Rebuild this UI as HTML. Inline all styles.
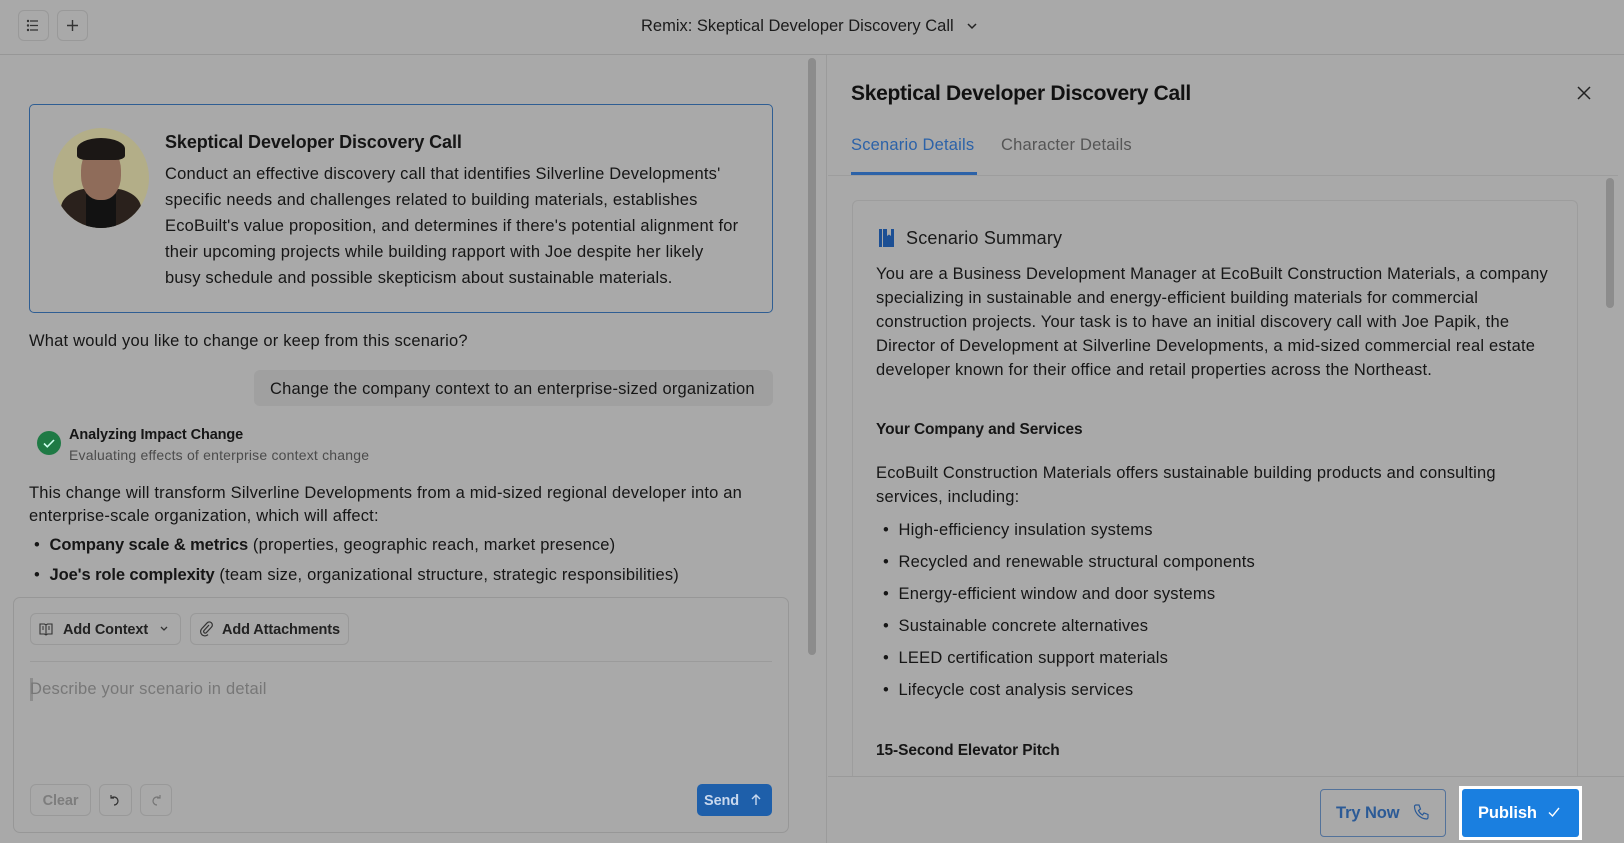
<!DOCTYPE html>
<html><head><meta charset="utf-8"><style>
*{box-sizing:border-box;margin:0;padding:0}
body{width:1624px;height:843px;overflow:hidden;background:#a9a9a9;font-family:"Liberation Sans",sans-serif;color:#161616;position:relative;letter-spacing:.2px}
b,.bd{letter-spacing:-.1px}
.a{position:absolute;white-space:nowrap}
.btn{position:absolute;border:1px solid #999;border-radius:6px;background:#a9a9a9}
.card p{font-size:16.5px;line-height:26px}
</style></head><body>
<div class="a" style="left:0;top:54px;width:1624px;height:1px;background:#979797"></div>
<div class="btn" style="left:18px;top:10px;width:31px;height:31px">
<svg width="31" height="31" viewBox="0 0 31 31" style="position:absolute;left:-1px;top:-1px" stroke="#333" stroke-width="1.2" fill="none"><path d="M12 11h8M12 15.5h8M12 20h8"/><circle cx="10" cy="11" r=".6"/><circle cx="10" cy="15.5" r=".6"/><circle cx="10" cy="20" r=".6"/></svg></div>
<div class="btn" style="left:57px;top:10px;width:31px;height:31px">
<svg width="31" height="31" viewBox="0 0 31 31" style="position:absolute;left:-1px;top:-1px" stroke="#333" stroke-width="1.4" fill="none"><path d="M15.5 10v11M10 15.5h11"/></svg></div>
<div class="a" style="left:641px;top:17px;font-size:16.5px;color:#1b1b1b;letter-spacing:0">Remix: Skeptical Developer Discovery Call</div>
<svg class="a" style="left:966px;top:21px" width="12" height="10" viewBox="0 0 12 10" stroke="#222" stroke-width="1.5" fill="none"><path d="M2 3l4 4 4-4"/></svg>

<div class="a" style="left:808px;top:58px;width:8px;height:597px;background:#8c8c8c;border-radius:4px"></div>
<div class="a" style="left:826px;top:55px;width:1px;height:788px;background:#9b9b9b"></div>

<div class="a card" style="left:29px;top:104px;width:744px;height:209px;border:1.5px solid #2f5e93;border-radius:5px">
<div class="a" style="left:23px;top:23px;width:96px;height:100px;border-radius:50%;background:#b3ae88;overflow:hidden">
<div class="a" style="left:8px;top:60px;width:80px;height:50px;background:#2a211c;border-radius:40% 40% 0 0"></div>
<div class="a" style="left:33px;top:66px;width:30px;height:34px;background:#121212"></div>
<div class="a" style="left:28px;top:18px;width:40px;height:54px;background:#8f6c5a;border-radius:45%"></div>
<div class="a" style="left:24px;top:10px;width:48px;height:22px;background:#1b1715;border-radius:50% 50% 20% 20%"></div>
</div>
<div class="a bd" style="left:135px;top:27px;font-size:18px;font-weight:bold">Skeptical Developer Discovery Call</div>
<div class="a" style="left:135px;top:56px">
<p>Conduct an effective discovery call that identifies Silverline Developments'</p>
<p>specific needs and challenges related to building materials, establishes</p>
<p>EcoBuilt's value proposition, and determines if there's potential alignment for</p>
<p>their upcoming projects while building rapport with Joe despite her likely</p>
<p>busy schedule and possible skepticism about sustainable materials.</p></div>
</div>
<div class="a" style="left:29px;top:332px;font-size:16.5px">What would you like to change or keep from this scenario?</div>
<div class="a" style="left:254px;top:370px;width:519px;height:36px;background:#a0a0a0;border-radius:6px"></div>
<div class="a" style="left:270px;top:380px;font-size:16.5px">Change the company context to an enterprise-sized organization</div>
<svg class="a" style="left:37px;top:431px" width="24" height="24" viewBox="0 0 24 24"><circle cx="12" cy="12" r="12" fill="#1f7a45"/><path d="M7 12.5l3.3 3.3L17 9" stroke="#cfe" stroke-width="1.6" fill="none"/></svg>
<div class="a bd" style="left:69px;top:427px;font-size:14.5px;font-weight:bold">Analyzing Impact Change</div>
<div class="a" style="left:69px;top:447px;font-size:14px;color:#4b4b4b">Evaluating effects of enterprise context change</div>
<div class="a" style="left:29px;top:482px;font-size:16.5px;line-height:23px">This change will transform Silverline Developments from a mid-sized regional developer into an<br>enterprise-scale organization, which will affect:</div>
<div class="a" style="left:34px;top:536px;font-size:16.5px">•&nbsp;&nbsp;<b>Company scale &amp; metrics</b> (properties, geographic reach, market presence)</div>
<div class="a" style="left:34px;top:566px;font-size:16.5px">•&nbsp;&nbsp;<b>Joe's role complexity</b> (team size, organizational structure, strategic responsibilities)</div>

<div class="a" style="left:13px;top:597px;width:776px;height:236px;border:1px solid #979797;border-radius:7px;background:#a9a9a9"></div>
<div class="btn" style="left:30px;top:613px;width:151px;height:32px"></div>
<svg class="a" style="left:38px;top:621px" width="16" height="16" viewBox="0 0 16 16" stroke="#333" stroke-width="1.1" fill="none"><path d="M2 3h4.5l1.5 1 1.5-1H14v10H9.5L8 14l-1.5-1H2zM8 4v10M4 6h2M4 8h2M10 6h2M10 8h2"/></svg>
<div class="a bd" style="left:63px;top:622px;font-size:14.5px;font-weight:bold;color:#222">Add Context</div>
<svg class="a" style="left:159px;top:625px" width="10" height="8" viewBox="0 0 10 8" stroke="#333" stroke-width="1.3" fill="none"><path d="M2 2l3 3 3-3"/></svg>
<div class="btn" style="left:190px;top:613px;width:159px;height:32px"></div>
<svg class="a" style="left:198px;top:620px" width="16" height="18" viewBox="0 0 16 18" stroke="#333" stroke-width="1.2" fill="none"><path d="M11 5l-5 5.5a1.6 1.6 0 002.3 2.2l5.2-5.6a3 3 0 00-4.4-4.2L3.8 8.6a4.3 4.3 0 006.2 6"/></svg>
<div class="a bd" style="left:222px;top:622px;font-size:14.5px;font-weight:bold;color:#222">Add Attachments</div>
<div class="a" style="left:30px;top:661px;width:742px;height:1px;background:#9b9b9b"></div>
<div class="a" style="left:30px;top:678px;width:3px;height:23px;background:#8d8d8d"></div>
<div class="a" style="left:30px;top:680px;font-size:16.5px;color:#777">Describe your scenario in detail</div>
<div class="btn bd" style="left:30px;top:784px;width:61px;height:32px;color:#7d7d7d;font-size:14.5px;font-weight:bold;text-align:center;line-height:32px">Clear</div>
<div class="btn" style="left:99px;top:784px;width:33px;height:32px"></div>
<svg class="a" style="left:108px;top:793px" width="14" height="14" viewBox="0 0 14 14" stroke="#333" stroke-width="1.2" fill="none"><path d="M3 2v3h3M3.3 5A4 4 0 1 1 6 12"/></svg>
<div class="btn" style="left:140px;top:784px;width:32px;height:32px"></div>
<svg class="a" style="left:149px;top:793px" width="14" height="14" viewBox="0 0 14 14" stroke="#777" stroke-width="1.2" fill="none"><path d="M11 2v3H8M10.7 5A4 4 0 1 0 8 12"/></svg>
<div class="a" style="left:697px;top:784px;width:75px;height:32px;background:#1e5faa;border-radius:5px"></div>
<div class="a bd" style="left:704px;top:793px;font-size:14.5px;font-weight:bold;color:#c8d8ee">Send</div>
<svg class="a" style="left:750px;top:793px" width="12" height="14" viewBox="0 0 12 14" stroke="#c8d8ee" stroke-width="1.4" fill="none"><path d="M6 12V2M2 6l4-4 4 4"/></svg>

<div class="a bd" style="left:851px;top:82px;font-size:21px;font-weight:bold;color:#111;letter-spacing:-.3px">Skeptical Developer Discovery Call</div>
<svg class="a" style="left:1576px;top:85px" width="16" height="16" viewBox="0 0 16 16" stroke="#222" stroke-width="1.5"><path d="M2 2l12 12M14 2L2 14"/></svg>
<div class="a" style="left:851px;top:136px;font-size:16.5px;color:#2c62a8">Scenario Details</div>
<div class="a" style="left:1001px;top:136px;font-size:16.5px;color:#555">Character Details</div>
<div class="a" style="left:828px;top:175px;width:790px;height:1px;background:#9d9d9d"></div>
<div class="a" style="left:851px;top:172px;width:126px;height:3px;background:#2c62a8"></div>
<div class="a" style="left:852px;top:200px;width:726px;height:580px;border:1px solid #9d9d9d;border-bottom:none;border-radius:6px 6px 0 0"></div>
<div class="a" style="left:1606px;top:178px;width:8px;height:130px;background:#8c8c8c;border-radius:4px"></div>
<svg class="a" style="left:878px;top:228px" width="17" height="20" viewBox="0 0 17 20"><path d="M1 1h3v18H1zM5 1h11v18H5z" fill="#1c4f94"/><path d="M9 1v7l2-1.5L13 8V1" fill="#a9a9a9"/></svg>
<div class="a" style="left:906px;top:228px;font-size:18px;color:#1a1a1a">Scenario Summary</div>
<div class="a" style="left:876px;top:262px;font-size:16.5px;line-height:24px">You are a Business Development Manager at EcoBuilt Construction Materials, a company<br>specializing in sustainable and energy-efficient building materials for commercial<br>construction projects. Your task is to have an initial discovery call with Joe Papik, the<br>Director of Development at Silverline Developments, a mid-sized commercial real estate<br>developer known for their office and retail properties across the Northeast.</div>
<div class="a bd" style="left:876px;top:421px;font-size:15.5px;font-weight:bold">Your Company and Services</div>
<div class="a" style="left:876px;top:461px;font-size:16.5px;line-height:24px">EcoBuilt Construction Materials offers sustainable building products and consulting<br>services, including:</div>
<div class="a" style="left:883px;top:514px;font-size:16.5px;line-height:32px">•&nbsp;&nbsp;High-efficiency insulation systems<br>•&nbsp;&nbsp;Recycled and renewable structural components<br>•&nbsp;&nbsp;Energy-efficient window and door systems<br>•&nbsp;&nbsp;Sustainable concrete alternatives<br>•&nbsp;&nbsp;LEED certification support materials<br>•&nbsp;&nbsp;Lifecycle cost analysis services</div>
<div class="a bd" style="left:876px;top:742px;font-size:15.5px;font-weight:bold">15-Second Elevator Pitch</div>
<div class="a" style="left:828px;top:776px;width:796px;height:67px;background:#a9a9a9;border-top:1px solid #9a9a9a"></div>
<div class="a" style="left:1320px;top:789px;width:126px;height:48px;border:1px solid #53729a;border-radius:4px"></div>
<div class="a bd" style="left:1336px;top:804px;font-size:16.5px;font-weight:bold;color:#2b5a96">Try Now</div>
<svg class="a" style="left:1413px;top:803px" width="16" height="18" viewBox="0 0 16 18" stroke="#2b5a96" stroke-width="1.2" fill="none"><path d="M3 2l3 0 1.5 4-2 1.5a9 9 0 004 4.5l1.5-2 4 1.5v3a1.5 1.5 0 01-1.5 1.5A13 13 0 011.5 3.5 1.5 1.5 0 013 2z"/></svg>
<div class="a" style="left:1459px;top:786px;width:123px;height:54px;background:#fff"></div>
<div class="a" style="left:1462px;top:789px;width:117px;height:48px;background:#1a7fe0;border-radius:3px"></div>
<div class="a bd" style="left:1478px;top:804px;font-size:16.5px;font-weight:bold;color:#fff">Publish</div>
<svg class="a" style="left:1547px;top:806px" width="14" height="12" viewBox="0 0 14 12" stroke="#fff" stroke-width="1.4" fill="none"><path d="M2 6.5l3.5 3.5L12 2"/></svg>
</body></html>
